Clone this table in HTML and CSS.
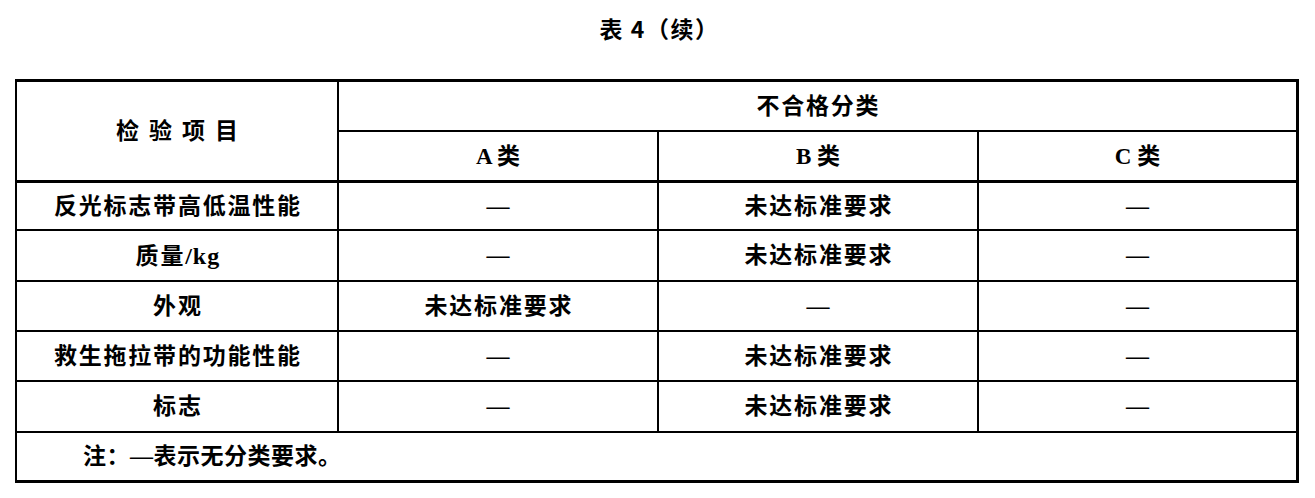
FILE: index.html
```html
<!DOCTYPE html>
<html lang="zh-CN">
<head>
<meta charset="utf-8">
<title>表 4（续）</title>
<link rel="stylesheet" href="styles.css">
</head>
<body>
<div class="title">表 4（续）</div>
<table class="grid">
  <colgroup>
    <col class="c1"><col class="c2"><col class="c3"><col class="c4">
  </colgroup>
  <tr class="h1">
    <th class="item last-head" rowspan="2">检验项目</th>
    <th class="endcol" colspan="3">不合格分类</th>
  </tr>
  <tr class="h2">
    <th class="last-head cls">A 类</th>
    <th class="last-head cls">B 类</th>
    <th class="last-head cls endcol">C 类</th>
  </tr>
  <tr class="r1">
    <td>反光标志带高低温性能</td><td>—</td><td>未达标准要求</td><td class="endcol">—</td>
  </tr>
  <tr class="r2">
    <td>质量<span class="latin">/kg</span></td><td>—</td><td>未达标准要求</td><td class="endcol">—</td>
  </tr>
  <tr class="r3">
    <td>外观</td><td>未达标准要求</td><td>—</td><td class="endcol">—</td>
  </tr>
  <tr class="r4">
    <td>救生拖拉带的功能性能</td><td>—</td><td>未达标准要求</td><td class="endcol">—</td>
  </tr>
  <tr class="r5">
    <td>标志</td><td>—</td><td>未达标准要求</td><td class="endcol">—</td>
  </tr>
  <tr class="note-row">
    <td class="note endcol" colspan="4">注：—表示无分类要求。</td>
  </tr>
</table>
</body>
</html>
```
FILE: styles.css
```css
html, body {
  margin: 0;
  padding: 0;
  background: #ffffff;
  color: #000000;
}

body {
  width: 1315px;
  height: 498px;
  overflow: hidden;
  font-family: "Liberation Serif", "Noto Sans CJK SC", serif;
}

.title {
  height: 56px;
  margin-bottom: 23px;
  display: flex;
  align-items: center;
  justify-content: center;
  font-family: "Noto Sans CJK SC", sans-serif;
  font-weight: 700;
  font-size: 23px;
  letter-spacing: 1.5px;
  padding-left: 4px;
}

.grid {
  margin-left: 15px;
  width: 1284px;
  box-sizing: border-box;
  table-layout: fixed;
  border-collapse: separate;
  border-spacing: 0;
  border-top: 3px solid #000;
  border-left: 2px solid #000;
}

.c1 { width: 322px; }
.c2 { width: 320px; }
.c3 { width: 320px; }
.c4 { width: 320px; }

.grid th,
.grid td {
  padding: 0 0 0 1.8px;
  border-right: 2px solid #000;
  border-bottom: 2px solid #000;
  text-align: center;
  vertical-align: middle;
  font-size: 23px;
  line-height: 1;
  font-weight: 700;
  letter-spacing: 1.8px;
  white-space: nowrap;
}

.grid .endcol {
  border-right-width: 3px;
}

.grid .last-head {
  border-bottom-width: 3px;
}

.grid .item {
  letter-spacing: 10px;
  padding-left: 10px;
}

.grid .cls {
  letter-spacing: 0;
  padding-left: 0;
}

.latin {
  font-size: 24px;
  letter-spacing: 1px;
}

.h1 { height: 50px; }
.h2 { height: 51px; }
.r1 { height: 48px; }
.r2 { height: 51px; }
.r3 { height: 50px; }
.r4 { height: 50px; }
.r5 { height: 51px; }
.note-row { height: 50px; }

.grid .note {
  text-align: left;
  padding-left: 66px;
  letter-spacing: 0.5px;
  border-bottom-width: 3px;
}
```
